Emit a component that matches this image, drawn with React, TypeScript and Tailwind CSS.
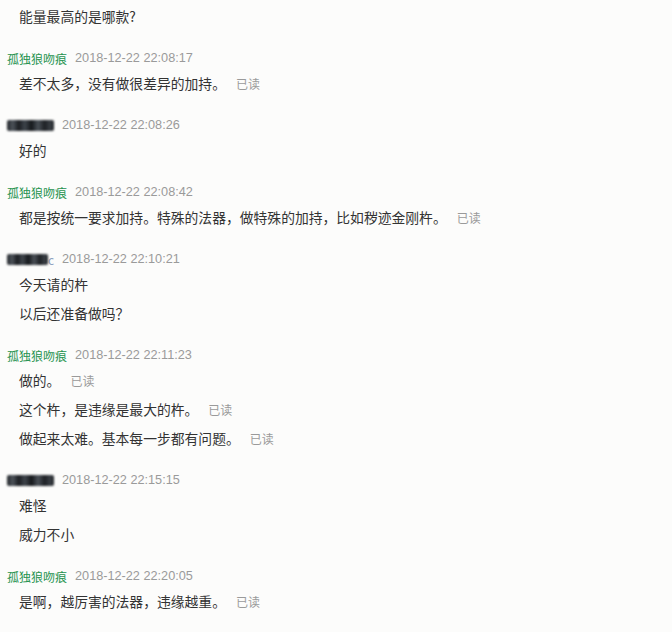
import React from "react";

type Msg = { text: string; read?: boolean };
type Group = { name: "me" | "blur" | "blur2"; time: string; msgs: Msg[] };

const groups: Group[] = [
  { name: "me", time: "2018-12-22 22:08:17", msgs: [{ text: "差不太多，没有做很差异的加持。", read: true }] },
  { name: "blur", time: "2018-12-22 22:08:26", msgs: [{ text: "好的" }] },
  {
    name: "me",
    time: "2018-12-22 22:08:42",
    msgs: [{ text: "都是按统一要求加持。特殊的法器，做特殊的加持，比如秽迹金刚杵。", read: true }],
  },
  { name: "blur2", time: "2018-12-22 22:10:21", msgs: [{ text: "今天请的杵" }, { text: "以后还准备做吗？" }] },
  {
    name: "me",
    time: "2018-12-22 22:11:23",
    msgs: [
      { text: "做的。", read: true },
      { text: "这个杵，是违缘是最大的杵。", read: true },
      { text: "做起来太难。基本每一步都有问题。", read: true },
    ],
  },
  { name: "blur", time: "2018-12-22 22:15:15", msgs: [{ text: "难怪" }, { text: "威力不小" }] },
  { name: "me", time: "2018-12-22 22:20:05", msgs: [{ text: "是啊，越厉害的法器，违缘越重。", read: true }] },
];

function MsgRow({ m }: { m: Msg }) {
  return (
    <div className="h-[29px] pl-[19px] flex items-center gap-[10px] whitespace-nowrap">
      <span className="text-[13.8px] text-[#333333]">{m.text}</span>
      {m.read && <span className="text-[12px] text-[#9a9a9a]">已读</span>}
    </div>
  );
}

function Blob({ withC }: { withC?: boolean }) {
  return (
    <span className="inline-flex items-center">
      <span
        className={
          "inline-block h-[11px] rounded-[2px] blur-[0.9px] bg-[linear-gradient(90deg,#23272b_0%,#4d535a_12%,#1b1e22_25%,#3f454c_38%,#15181b_52%,#4a5057_66%,#1e2125_80%,#3a3f45_92%,#202327_100%)] " +
          (withC ? "w-[41px]" : "w-[47px]")
        }
      />
      {withC && <span className="text-[12px] leading-[12px] text-[#8fa3c0] w-[6px]">c</span>}
    </span>
  );
}

function Header({ g }: { g: Group }) {
  return (
    <div className="h-[21px] pl-[7px] flex items-center gap-[8px] whitespace-nowrap">
      {g.name === "me" ? (
        <span className="text-[12px] text-[#26934f]">孤独狼吻痕</span>
      ) : (
        <Blob withC={g.name === "blur2"} />
      )}
      <span
        className="text-[12.7px] text-[#9a9a9a]"
        style={{ fontFamily: '"Liberation Sans", Arial, sans-serif' }}
      >
        {g.time}
      </span>
    </div>
  );
}

export default function App() {
  return (
    <div
      className="w-[672px] h-[632px] bg-[#fcfcfb] overflow-hidden pt-[2px] flex flex-col gap-[17px]"
      style={{ fontFamily: '"Noto Sans CJK SC", "Noto Sans", sans-serif' }}
    >
      <MsgRow m={{ text: "能量最高的是哪款?" }} />
      {groups.map((g, i) => (
        <div key={i} className="flex flex-col">
          <Header g={g} />
          {g.msgs.map((m, j) => (
            <MsgRow key={j} m={m} />
          ))}
        </div>
      ))}
    </div>
  );
}
